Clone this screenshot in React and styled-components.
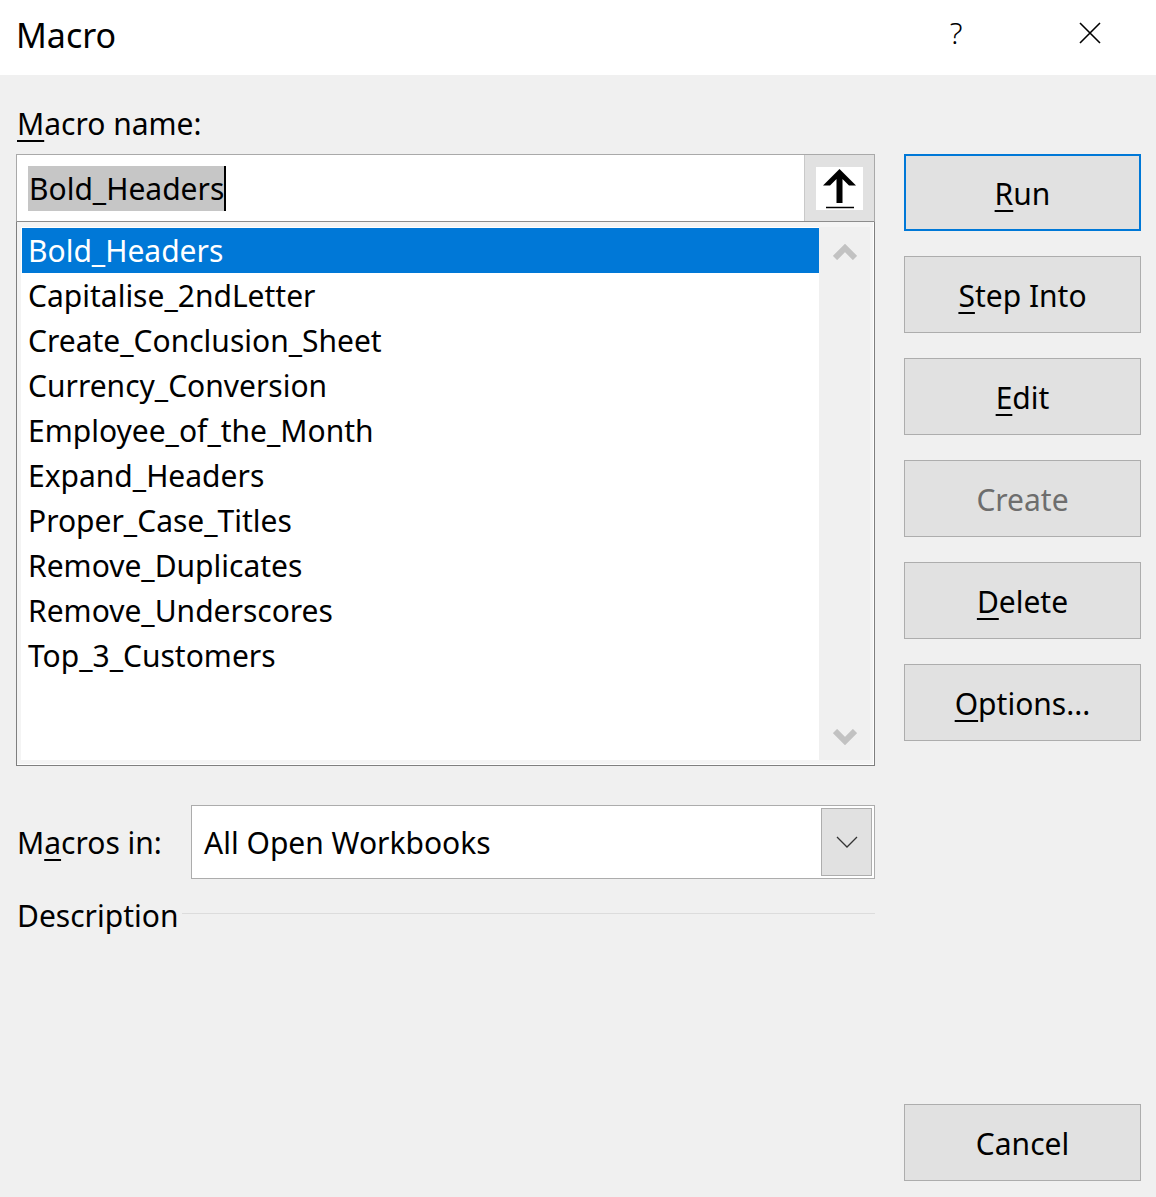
import React from "react";
import styled, { createGlobalStyle } from "styled-components";

const Global = createGlobalStyle`
  html, body { margin: 0; padding: 0; }
  body { font-family: "Noto Sans", "Open Sans", sans-serif; background: #f0f0f0; }
`;

const FONT = `"Noto Sans", "Open Sans", sans-serif`;

const Dialog = styled.div`
  width: 1156px;
  height: 1197px;
  background: #f0f0f0;
  display: flex;
  flex-direction: column;
  font-family: ${FONT};
  color: #000;
  overflow: hidden;
`;

const TitleBar = styled.div`
  height: 75px;
  background: #ffffff;
  display: flex;
  align-items: center;
  padding-left: 16px;
  box-sizing: border-box;
`;

const Title = styled.div`
  font-size: 34px;
  flex: 1;
  margin-top: -6px;
`;

const TitleBtn = styled.div`
  width: ${(p) => p.$w}px;
  height: 75px;
  display: flex;
  align-items: center;
  justify-content: center;
  font-size: 30px;
  font-weight: 300;
  margin-top: -10px;
`;

const Body = styled.div`
  flex: 1;
  display: grid;
  grid-template-columns: 859px 237px;
  column-gap: 29px;
  padding-left: 16px;
`;

const LeftCol = styled.div`
  display: flex;
  flex-direction: column;
`;

const RightCol = styled.div`
  display: flex;
  flex-direction: column;
  padding-top: 79px;
  padding-bottom: 16px;
`;

const Label = styled.div`
  font-size: 30px;
  height: ${(p) => p.$h}px;
  box-sizing: border-box;
  padding-top: ${(p) => p.$pt || 0}px;
  display: flex;
  align-items: center;
  padding-left: 1px;
  white-space: nowrap;
  u {
    text-decoration-thickness: 2px;
    text-underline-offset: 5px;
  }
`;

const NameBox = styled.div`
  height: 68px;
  box-sizing: border-box;
  border: 1px solid #a9a9a9;
  border-bottom: 1px solid #8c8c8c;
  display: flex;
  background: #fff;
`;

const NameInput = styled.div`
  flex: 1;
  display: flex;
  align-items: center;
  padding-left: 11px;
  font-size: 30px;
`;

const Selected = styled.span`
  background: #c6c6c6;
  padding: 0 0 0 1px;
  line-height: 45px;
  border-right: 2px solid #000;
`;

const UpBtn = styled.div`
  width: 69px;
  background: #e1e1e1;
  border-left: 1px solid #c9c9c9;
  display: flex;
  align-items: center;
  justify-content: center;
`;

const UpIcon = styled.div`
  width: 47px;
  height: 43px;
  background: #fff;
  display: flex;
  align-items: center;
  justify-content: center;
`;

const ListBox = styled.div`
  height: 544px;
  box-sizing: border-box;
  border: 1px solid #7f7f7f;
  border-top: none;
  background: #f4f4f4;
  padding: 5px 4px 5px 4px;
  display: flex;
  box-shadow: inset -1px -1px 0 #ffffff;
`;

const ListItems = styled.div`
  flex: 1;
  background: #fff;
  padding: 1px 0 0 1px;
`;

const Item = styled.div`
  height: 45px;
  display: flex;
  align-items: center;
  padding-left: 6px;
  font-size: 30px;
  white-space: nowrap;
  background: ${(p) => (p.$sel ? "#0078d7" : "transparent")};
  color: ${(p) => (p.$sel ? "#fff" : "#000")};
`;

const ScrollBar = styled.div`
  width: 51px;
  background: #f0f0f0;
  display: flex;
  flex-direction: column;
  justify-content: space-between;
  align-items: center;
  padding: 17px 0 15px;
`;

const SelectRow = styled.div`
  display: flex;
  align-items: center;
  margin-top: 39px;
  height: 74px;
`;

const SelectBox = styled.div`
  margin-left: auto;
  width: 684px;
  height: 74px;
  box-sizing: border-box;
  border: 1px solid #acacac;
  background: #fff;
  display: flex;
  align-items: center;
  padding: 2px 2px 2px 12px;
  font-size: 30px;
`;

const SelectText = styled.div`
  flex: 1;
`;

const DropBtn = styled.div`
  width: 51px;
  height: 68px;
  box-sizing: border-box;
  background: #e1e1e1;
  border: 1px solid #adadad;
  display: flex;
  align-items: center;
  justify-content: center;
`;

const DescRow = styled.div`
  display: flex;
  align-items: center;
  height: 72px;
  gap: 4px;
`;

const DescLine = styled.div`
  flex: 1;
  height: 1px;
  background: #dcdcdc;
  margin-top: -4px;
`;

const Button = styled.div`
  height: 77px;
  box-sizing: border-box;
  background: #e1e1e1;
  border: ${(p) => (p.$default ? "2px solid #0078d7" : "1px solid #adadad")};
  display: flex;
  align-items: center;
  justify-content: center;
  font-size: 30px;
  padding-top: 2px;
  color: ${(p) => (p.$disabled ? "#6d6d6d" : "#000")};
  margin-bottom: ${(p) => (p.$last ? 0 : 25)}px;
  white-space: nowrap;
  u {
    text-decoration-thickness: 2px;
    text-underline-offset: 5px;
  }
`;

const Spacer = styled.div`
  flex: 1;
`;

const macros = [
  "Bold_Headers",
  "Capitalise_2ndLetter",
  "Create_Conclusion_Sheet",
  "Currency_Conversion",
  "Employee_of_the_Month",
  "Expand_Headers",
  "Proper_Case_Titles",
  "Remove_Duplicates",
  "Remove_Underscores",
  "Top_3_Customers",
];

const Chevron = ({ up }) => (
  <svg width="24" height="16" viewBox="0 0 24 16">
    <path
      d={up ? "M2 14 L12 4 L22 14" : "M2 2 L12 12 L22 2"}
      fill="none"
      stroke="#c2c2c2"
      strokeWidth="6"
    />
  </svg>
);

export default function App() {
  return (
    <>
      <Global />
      <Dialog>
        <TitleBar>
          <Title>Macro</Title>
          <TitleBtn $w={136}>?</TitleBtn>
          <TitleBtn $w={132}>
            <svg width="24" height="24" viewBox="0 0 24 24">
              <path d="M2 2 L22 22 M22 2 L2 22" stroke="#000" strokeWidth="1.6" />
            </svg>
          </TitleBtn>
        </TitleBar>
        <Body>
          <LeftCol>
            <Label $h={79} $pt={17}>
              <span>
                <u>M</u>acro name:
              </span>
            </Label>
            <NameBox>
              <NameInput>
                <Selected>Bold_Headers</Selected>
              </NameInput>
              <UpBtn>
                <UpIcon>
                  <svg width="47" height="43" viewBox="0 0 47 43">
                    <path
                      d="M23.5 2 L40 18.5 L33 18.5 L26.5 12 L26.5 36 L20.5 36 L20.5 12 L14 18.5 L7 18.5 Z"
                      fill="#000"
                    />
                    <path d="M10 40.5 L38 40.5" stroke="#000" strokeWidth="1.5" />
                  </svg>
                </UpIcon>
              </UpBtn>
            </NameBox>
            <ListBox>
              <ListItems>
                {macros.map((m, i) => (
                  <Item key={m} $sel={i === 0}>
                    {m}
                  </Item>
                ))}
              </ListItems>
              <ScrollBar>
                <Chevron up />
                <Chevron />
              </ScrollBar>
            </ListBox>
            <SelectRow>
              <Label $h={74}>
                <span>
                  M<u>a</u>cros in:
                </span>
              </Label>
              <SelectBox>
                <SelectText>All Open Workbooks</SelectText>
                <DropBtn>
                  <svg width="24" height="14" viewBox="0 0 24 14">
                    <path d="M2 2 L12 12 L22 2" fill="none" stroke="#333" strokeWidth="1.3" />
                  </svg>
                </DropBtn>
              </SelectBox>
            </SelectRow>
            <DescRow>
              <Label $h={72}>Description</Label>
              <DescLine />
            </DescRow>
          </LeftCol>
          <RightCol>
            <Button $default>
              <span>
                <u>R</u>un
              </span>
            </Button>
            <Button>
              <span>
                <u>S</u>tep Into
              </span>
            </Button>
            <Button>
              <span>
                <u>E</u>dit
              </span>
            </Button>
            <Button $disabled>Create</Button>
            <Button>
              <span>
                <u>D</u>elete
              </span>
            </Button>
            <Button>
              <span>
                <u>O</u>ptions...
              </span>
            </Button>
            <Spacer />
            <Button $last>Cancel</Button>
          </RightCol>
        </Body>
      </Dialog>
    </>
  );
}
